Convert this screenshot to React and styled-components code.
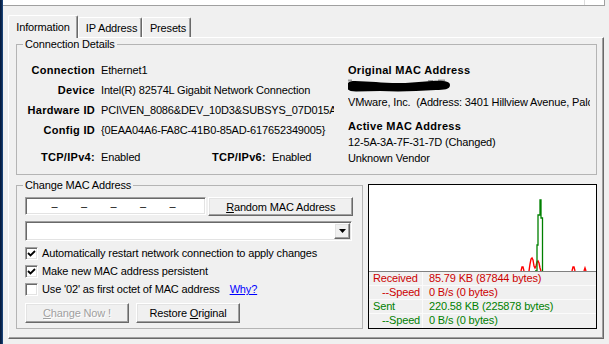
import React from "react";
import styled, { createGlobalStyle } from "styled-components";

const GlobalStyle = createGlobalStyle`
  html, body { margin: 0; padding: 0; background: #f0f0f0; }
  body { font-family: "Liberation Sans", Arial, sans-serif; font-size: 11px; color: #000; }
  *, *::before, *::after { box-sizing: border-box; }
`;

const Window = styled.div`
  width: 609px;
  height: 344px;
  display: flex;
  background: #f0f0f0;
  overflow: hidden;
  font-family: "Liberation Sans", Arial, sans-serif;
  font-size: 11px;
  letter-spacing: -0.15px;
  color: #000;
`;

const DesktopEdge = styled.div`
  width: 3px;
  flex: none;
  background: linear-gradient(to right, #07193a, #0b2c58 60%, #24518a);
`;

const Main = styled.div`
  flex: 1;
  min-width: 0;
  display: flex;
  flex-direction: column;
`;

const ListStub = styled.div`
  width: 602px;
  height: 6px;
  display: flex;
  background: #fff;
  border-bottom: 1px solid #a0a0a0;
  border-right: 1px solid #a0a0a0;
`;

const ListColumn = styled.div`
  width: 582px;
  border-right: 1px solid #dcdcdc;
`;

const TabRow = styled.div`
  display: flex;
  align-items: flex-end;
  height: 22px;
  margin: 9px 0 0 5px;
`;

const Tab = styled.div`
  position: relative;
  z-index: ${(p) => (p.$active ? 2 : 1)};
  width: ${(p) => p.$w}px;
  height: ${(p) => (p.$active ? 23 : 20)}px;
  margin-bottom: ${(p) => (p.$active ? -1 : 0)}px;
  background: #f0f0f0;
  border-top: 1px solid #fff;
  border-left: 1px solid #fff;
  border-right: 1px solid #696969;
  box-shadow: inset -1px 0 0 #a0a0a0;
  border-radius: 2px 2px 0 0;
  display: flex;
  align-items: center;
  justify-content: center;
  padding-left: ${(p) => p.$shift || 0}px;
  white-space: nowrap;
`;

const Panel = styled.div`
  margin-left: 5px;
  width: 596px;
  height: 302px;
  border-top: 1px solid #fff;
  border-left: 1px solid #fff;
  border-right: 1px solid #696969;
  border-bottom: 1px solid #696969;
  box-shadow: inset -1px -1px 0 #a0a0a0;
  padding: 0 6px 0 7px;
  display: flex;
  flex-direction: column;
`;

const Group = styled.fieldset`
  margin: 0;
  min-width: 0;
  width: ${(p) => (p.$w ? `${p.$w}px` : "auto")};
  padding: ${(p) => p.$pad};
  border: 1px solid #b4b4b4;
`;

const Legend = styled.legend`
  margin-left: -2px;
  padding: 0 2px;
  line-height: 13px;
  font-size: 11px;
`;

const DetailsBody = styled.div`
  display: flex;
`;

const LeftCol = styled.div`
  width: 323px;
  flex: none;
`;

const InfoGrid = styled.div`
  display: grid;
  grid-template-columns: 70px 233px;
  grid-auto-rows: 20px;
  column-gap: 6px;
  align-items: center;
`;

const Label = styled.span`
  font-weight: bold;
  letter-spacing: 0.3px;
  text-align: right;
  white-space: nowrap;
`;

const Value = styled.span`
  white-space: nowrap;
  overflow: hidden;
`;

const TcpRow = styled.div`
  margin-top: 7px;
  height: 20px;
  display: grid;
  grid-template-columns: 70px 89px 70px auto;
  column-gap: 6px;
  align-items: center;
`;

const RightCol = styled.div`
  width: 242px;
  padding-top: 2px;
  overflow: hidden;
  display: flex;
  flex-direction: column;
`;

const Line = styled.div`
  height: 16px;
  line-height: 16px;
  white-space: pre;
  overflow: hidden;
  display: flex;
  align-items: center;
  margin-top: ${(p) => p.$gap || 0}px;
  font-weight: ${(p) => (p.$bold ? "bold" : "normal")};
  letter-spacing: ${(p) => (p.$bold ? "0.3px" : "inherit")};
`;

const RedactionMark = styled.svg`
  display: block;
  flex: none;
  width: 106px;
  height: 16px;
  margin-left: -2px;
`;

const LowerRow = styled.div`
  display: flex;
  align-items: flex-start;
  gap: 5px;
  margin-top: 4px;
`;

const EditRow = styled.div`
  display: flex;
  align-items: flex-start;
  gap: 2px;
  height: 19px;
`;

const sunken = `
  border: 1px solid;
  border-color: #a0a0a0 #fff #fff #a0a0a0;
  box-shadow: inset 1px 1px 0 #696969, inset -1px -1px 0 #e3e3e3;
  background: #fff;
`;

const raised = `
  border: 1px solid;
  border-color: #fff #696969 #696969 #fff;
  box-shadow: inset -1px -1px 0 #a0a0a0, inset 1px 1px 0 #e3e3e3;
  background: #f0f0f0;
`;

const MacEdit = styled.div`
  ${sunken}
  width: 182px;
  height: 18px;
  display: flex;
  align-items: center;
  padding-left: 1px;
`;

const MacSlot = styled.span`
  width: 24.5px;
  flex: none;
`;

const MacDash = styled.span`
  width: 5px;
  flex: none;
  text-align: center;
  line-height: 12px;
  letter-spacing: 0;
`;

const Button = styled.button`
  ${raised}
  width: ${(p) => p.$w}px;
  height: ${(p) => p.$h || 20}px;
  padding: 0;
  margin: 0;
  font-family: inherit;
  font-size: 11px;
  letter-spacing: -0.15px;
  color: ${(p) => (p.disabled ? "#a0a0a0" : "#000")};
  text-shadow: ${(p) => (p.disabled ? "1px 1px 0 #fff" : "none")};
  display: flex;
  align-items: center;
  justify-content: center;
  white-space: nowrap;
`;

const Combo = styled.div`
  ${sunken}
  width: 327px;
  height: 20px;
  margin-top: 5px;
  display: flex;
  justify-content: flex-end;
  padding: 1px;
`;

const ComboArrow = styled.div`
  ${raised}
  width: 16px;
  height: 16px;
  display: flex;
  align-items: center;
  justify-content: center;
`;

const Checks = styled.div`
  margin-top: 3px;
  display: flex;
  flex-direction: column;
`;

const CheckRow = styled.div`
  height: 18px;
  display: flex;
  align-items: center;
  gap: 4px;
  white-space: nowrap;
`;

const CheckBox = styled.span`
  ${sunken}
  width: 13px;
  height: 13px;
  flex: none;
  display: flex;
  align-items: center;
  justify-content: center;
`;

const Link = styled.a`
  color: #0000ff;
  text-decoration: underline;
  margin-left: 6px;
`;

const ButtonRow = styled.div`
  margin-top: 5px;
  display: flex;
  gap: 7px;
`;

const GraphBox = styled.div`
  width: 229px;
  height: 145px;
  margin-top: 5px;
  border: 1px solid #000;
  background: #fff;
  display: flex;
  flex-direction: column;
`;

const Plot = styled.div`
  height: 87px;
  border-bottom: 1px solid #808080;
  flex: none;
  display: flex;
`;

const Stats = styled.div`
  flex: 1;
  background: #f0f0f0;
  display: flex;
  flex-direction: column;
`;

const StatRow = styled.div`
  height: 14px;
  display: grid;
  grid-template-columns: 54px 1fr;
  border-bottom: ${(p) => (p.$last ? "none" : "1px solid #fbfbfb")};
  color: ${(p) => p.$color};
  line-height: 13px;
  white-space: nowrap;
`;

const StatLabel = styled.span`
  border-right: 1px solid #fbfbfb;
  padding-left: ${(p) => 4 + (p.$indent || 0)}px;
`;

const StatValue = styled.span`
  padding-left: 6px;
`;

const Check = () => (
  <svg width="9" height="9" viewBox="0 0 9 9">
    <polyline points="1,4 3.5,6.5 8,2" fill="none" stroke="#000" strokeWidth="1.8" />
  </svg>
);

const Redaction = () => (
  <RedactionMark viewBox="0 0 106 16">
    <path d="M2 1.5 h4 v2 h-4z M92 1.5 h7 v1.5 h-7z M82 2 h5 v1.5 h-5z" fill="#9a9a9a" />
    <path
      d="M1 8.5 C1 4 4 3 9 3 L30 4 C40 5 55 5.5 66 4.5 L86 3 C97 2.5 104 3 104 7 C104 11.5 98 12 90 12 L70 13 C58 13.5 46 13.5 34 13 L10 13.5 C3 13.5 1 12 1 8.5 Z"
      fill="#000"
    />
  </RedactionMark>
);

const GraphSvg = () => (
  <svg width="227" height="86" viewBox="0 0 227 86">
    <polyline
      points="152,86 153,82 154,82 155,86"
      fill="none"
      stroke="#ff0000"
      strokeWidth="1.4"
    />
    <polyline
      points="160,86 161,79 162,74 163,73 164,75 165,81 166,83 167,81 168,77 169,76 170,78 171,83 172,86"
      fill="none"
      stroke="#ff0000"
      strokeWidth="1.4"
    />
    <polyline points="203,86 204,82 205,82 206,86" fill="none" stroke="#ff0000" strokeWidth="1.4" />
    <polyline points="215,86 216,83 217,86" fill="none" stroke="#ff0000" strokeWidth="1.4" />
    <polyline
      points="166,86 168,86 168,60 169,60 169,30 171,30 171,15 172,15 172,33 173.5,33 173.5,86"
      fill="none"
      stroke="#008000"
      strokeWidth="1.3"
    />
  </svg>
);

const details = [
  ["Connection", "Ethernet1"],
  ["Device", "Intel(R) 82574L Gigabit Network Connection"],
  ["Hardware ID", "PCI\\VEN_8086&DEV_10D3&SUBSYS_07D015AD&REV_00"],
  ["Config ID", "{0EAA04A6-FA8C-41B0-85AD-617652349005}"],
];

export default function App() {
  return (
    <>
      <GlobalStyle />
      <Window>
        <DesktopEdge />
        <Main>
          <ListStub>
            <ListColumn />
          </ListStub>
          <TabRow>
            <Tab $active $w={70}>Information</Tab>
            <Tab $w={64} $shift={3}>IP Address</Tab>
            <Tab $w={49} $shift={3}>Presets</Tab>
          </TabRow>
          <Panel>
            <Group $pad="9px 0 7px 8px">
              <Legend>Connection Details</Legend>
              <DetailsBody>
                <LeftCol>
                  <InfoGrid>
                    {details.map(([k, v]) => (
                      <React.Fragment key={k}>
                        <Label>{k}</Label>
                        <Value>{v}</Value>
                      </React.Fragment>
                    ))}
                  </InfoGrid>
                  <TcpRow>
                    <Label>TCP/IPv4:</Label>
                    <Value>Enabled</Value>
                    <Label>TCP/IPv6:</Label>
                    <Value>Enabled</Value>
                  </TcpRow>
                </LeftCol>
                <RightCol>
                  <Line $bold>Original MAC Address</Line>
                  <Line>
                    <Redaction />
                  </Line>
                  <Line>VMware, Inc.  (Address: 3401 Hillview Avenue, Palo Alto CA 94304)</Line>
                  <Line $bold $gap={8}>Active MAC Address</Line>
                  <Line>12-5A-3A-7F-31-7D (Changed)</Line>
                  <Line>Unknown Vendor</Line>
                </RightCol>
              </DetailsBody>
            </Group>
            <LowerRow>
              <Group $w={347} $pad="5px 9px 5px 8px">
                <Legend>Change MAC Address</Legend>
                <EditRow>
                  <MacEdit>
                    <MacSlot />
                    <MacDash>–</MacDash>
                    <MacSlot />
                    <MacDash>–</MacDash>
                    <MacSlot />
                    <MacDash>–</MacDash>
                    <MacSlot />
                    <MacDash>–</MacDash>
                    <MacSlot />
                    <MacDash>–</MacDash>
                    <MacSlot />
                  </MacEdit>
                  <Button $w={145} $h={19}>
                    <span>
                      <u>R</u>andom MAC Address
                    </span>
                  </Button>
                </EditRow>
                <Combo>
                  <ComboArrow>
                    <svg width="7" height="4" viewBox="0 0 7 4">
                      <polygon points="0,0 7,0 3.5,4" fill="#000" />
                    </svg>
                  </ComboArrow>
                </Combo>
                <Checks>
                  <CheckRow>
                    <CheckBox>
                      <Check />
                    </CheckBox>
                    Automatically restart network connection to apply changes
                  </CheckRow>
                  <CheckRow>
                    <CheckBox>
                      <Check />
                    </CheckBox>
                    Make new MAC address persistent
                  </CheckRow>
                  <CheckRow>
                    <CheckBox />
                    Use '02' as first octet of MAC address
                    <Link>Why?</Link>
                  </CheckRow>
                </Checks>
                <ButtonRow>
                  <Button $w={104} disabled>
                    <span>
                      <u>C</u>hange Now !
                    </span>
                  </Button>
                  <Button $w={104}>
                    <span>
                      Restore <u>O</u>riginal
                    </span>
                  </Button>
                </ButtonRow>
              </Group>
              <GraphBox>
                <Plot>
                  <GraphSvg />
                </Plot>
                <Stats>
                  <StatRow $color="#cc0000">
                    <StatLabel>Received</StatLabel>
                    <StatValue>85.79 KB (87844 bytes)</StatValue>
                  </StatRow>
                  <StatRow $color="#cc0000">
                    <StatLabel $indent={9}>--Speed</StatLabel>
                    <StatValue>0 B/s (0 bytes)</StatValue>
                  </StatRow>
                  <StatRow $color="#008000">
                    <StatLabel>Sent</StatLabel>
                    <StatValue>220.58 KB (225878 bytes)</StatValue>
                  </StatRow>
                  <StatRow $color="#008000" $last>
                    <StatLabel $indent={9}>--Speed</StatLabel>
                    <StatValue>0 B/s (0 bytes)</StatValue>
                  </StatRow>
                </Stats>
              </GraphBox>
            </LowerRow>
          </Panel>
        </Main>
      </Window>
    </>
  );
}
